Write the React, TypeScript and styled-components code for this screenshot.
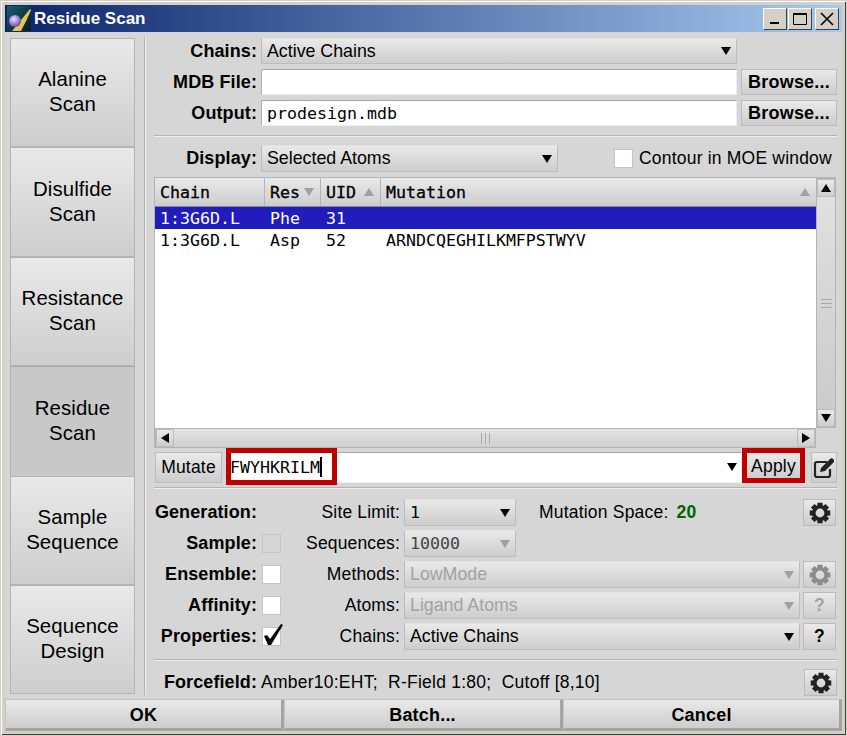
import React from "react";
import styled, { createGlobalStyle } from "styled-components";

const Global = createGlobalStyle`
  html, body { margin: 0; padding: 0; background: #d6d6d6; }
  * { box-sizing: border-box; }
`;

const sans = `"Liberation Sans", Arial, sans-serif`;
const mono = `"DejaVu Sans Mono", monospace`;
const buttonFace = `linear-gradient(#e9e9e9, #cdcdcd)`;

const Window = styled.div`
  width: 847px;
  height: 736px;
  padding: 5px 5px 5px;
  background: #d4d0c8;
  box-shadow: inset 0 0 0 1px #d4d0c8, inset 1px 1px 0 1px #fff, inset -1px -1px 0 1px #404040;
  display: flex;
  flex-direction: column;
  font: 17.8px ${sans};
  color: #000;
  overflow: hidden;
`;
const TitleBar = styled.div`
  height: 27px;
  flex: none;
  display: flex;
  align-items: center;
  padding-left: 2px;
  background: linear-gradient(90deg, #0a246a, #a6caf0);
  color: #fff;
  font-weight: bold;
  font-size: 17px;
  gap: 3px;
`;
const TitleText = styled.span`
  flex: 1;
  padding-top: 1px;
`;
const WinButtons = styled.div`
  display: flex;
  padding-right: 3px;
  gap: 1px;
`;
const WinButton = styled.div<{ $gapAfter?: boolean }>`
  width: 24px;
  height: 22px;
  background: #d4d0c8;
  border: 1px solid;
  border-color: #fff #404040 #404040 #fff;
  margin-right: ${(p) => (p.$gapAfter ? "2px" : "0")};
  display: flex;
  align-items: center;
  justify-content: center;
`;
const Body = styled.div`
  flex: 1;
  display: flex;
  background: #d6d6d6;
  min-height: 0;
  padding: 5px 0 4px 5px;
`;
const Tabs = styled.div`
  width: 125px;
  flex: none;
  display: grid;
  grid-auto-rows: 109.4px;
  padding-top: 1px;
`;
const Tab = styled.div<{ $active?: boolean }>`
  display: flex;
  align-items: center;
  justify-content: center;
  text-align: center;
  font-size: 20.4px;
  letter-spacing: 0.1px;
  line-height: 25px;
  background: ${(p) => (p.$active ? "#c8c8c8" : buttonFace)};
  border: 1px solid #b4b4b4;
  border-width: ${(p) => (p.$active ? "1px 1px 0" : "1px")};
  border-top-color: ${(p) => (p.$active ? "#a8a8a8" : "#b4b4b4")};
  padding-bottom: 1px;
`;
const Main = styled.div`
  margin-left: 9px;
  padding-left: 9px;
  width: 693px;
  border-left: 1px solid #b0b0b0;
  box-shadow: inset 1px 0 0 #eee;
  display: flex;
  flex-direction: column;
`;
const FileForm = styled.div`
  display: grid;
  grid-template-columns: 103px 476px 96px;
  grid-auto-rows: 26px;
  column-gap: 4px;
  row-gap: 5px;
  padding-top: 1px;
`;
const BoldLabel = styled.div`
  font-weight: bold;
  font-size: 18px;
  letter-spacing: 0.1px;
  text-align: right;
  align-self: center;
  white-space: nowrap;
`;
const Label = styled.div`
  font-size: 17.5px;
  letter-spacing: 0.15px;
  text-align: right;
  padding-right: 4px;
  align-self: center;
  white-space: nowrap;
`;
const Select = styled.div<{ $disabled?: boolean }>`
  display: flex;
  align-items: center;
  justify-content: space-between;
  height: 100%;
  padding: 0 5px 0 5px;
  background: ${buttonFace};
  border: 1px solid #bcbcbc;
  border-top-color: #e2e2e2;
  color: ${(p) => (p.$disabled ? "#a3a3a3" : "#000")};
`;
const Arrow = styled.span<{ $dir?: "up" | "down" | "left" | "right"; $muted?: boolean }>`
  display: inline-block;
  flex: none;
  width: 0;
  height: 0;
  border-style: solid;
  border-color: transparent;
  ${(p) => {
    const c = p.$muted ? "#a0a0a0" : "#000";
    switch (p.$dir) {
      case "up":
        return `border-width: 0 5px 8px; border-bottom-color: ${c};`;
      case "left":
        return `border-width: 5px 8px 5px 0; border-right-color: ${c};`;
      case "right":
        return `border-width: 5px 0 5px 8px; border-left-color: ${c};`;
      default:
        return `border-width: 8px 5px 0; border-top-color: ${c};`;
    }
  }}
`;
const TextField = styled.div`
  background: #fff;
  border: 1px solid #c4c4c4;
  border-left-color: #b0b0b0;
  border-top-color: #a8a8a8;
  border-bottom-color: #eee;
  border-right-color: #eee;
  display: flex;
  align-items: center;
  padding-left: 5px;
  font: 16.6px ${mono};
  color: #000;
  white-space: nowrap;
`;
const Button = styled.div<{ $bold?: boolean }>`
  background: ${buttonFace};
  border: 1px solid #bcbcbc;
  display: flex;
  align-items: center;
  justify-content: center;
  font-weight: ${(p) => (p.$bold ? "bold" : "normal")};
  font-size: ${(p) => (p.$bold ? "18px" : "17.5px")};
  letter-spacing: 0.2px;
  white-space: nowrap;
`;
const Separator = styled.div<{ $before: number; $after: number }>`
  flex: none;
  height: 2px;
  width: 683px;
  background: #b4b4b4;
  border-bottom: 1px solid #eee;
  margin: ${(p) => `${p.$before}px 0 ${p.$after}px`};
`;
const DisplayRow = styled.div`
  display: grid;
  grid-template-columns: 103px 301px 56px 19px 1fr;
  height: 27px;
  flex: none;
`;
const DisplaySelect = styled(Select)`
  margin-left: 4px;
`;
const CheckBox = styled.div<{ $disabled?: boolean }>`
  width: 19px;
  height: 19px;
  flex: none;
  position: relative;
  background: ${(p) => (p.$disabled ? "#d6d6d6" : "#fff")};
  border: 1px solid #c4c4c4;
  align-self: center;
`;
const CheckMark = styled.svg`
  position: absolute;
  left: 0;
  top: -5px;
  overflow: visible;
`;
const ContourLabel = styled.div`
  padding-left: 6px;
  align-self: center;
  white-space: nowrap;
  font-size: 17.5px;
  letter-spacing: 0.2px;
`;
const ListPanel = styled.div`
  margin-top: 5px;
  flex: none;
  height: 271px;
  width: 682px;
  display: grid;
  grid-template-columns: 661px 20px;
  grid-template-rows: 1fr 20px;
  border-top: 1px solid #b4b4b4;
  border-left: 1px solid #b4b4b4;
`;
const List = styled.div`
  background: #fff;
  display: flex;
  flex-direction: column;
  min-height: 0;
`;
const COLS = "110px 56px 60px 1fr";
const HeaderRow = styled.div`
  height: 29px;
  flex: none;
  display: grid;
  grid-template-columns: ${COLS};
  background: ${buttonFace};
  border-bottom: 1px solid #888;
`;
const HeaderCell = styled.div`
  display: flex;
  align-items: center;
  justify-content: space-between;
  padding: 0 6px 0 5px;
  border-right: 1px solid #b4b4b4;
  &:last-child {
    border-right: 0;
  }
`;
const HeaderText = styled.span`
  font: 16.6px ${mono};
  -webkit-text-stroke: 0.3px #000;
`;
const DataRow = styled.div<{ $selected?: boolean }>`
  height: 22px;
  display: grid;
  grid-template-columns: ${COLS};
  align-items: center;
  background: ${(p) => (p.$selected ? "#201cbe" : "#fff")};
  color: ${(p) => (p.$selected ? "#fff" : "#000")};
`;
const DataCell = styled.div`
  padding-left: 5px;
  font: 16.6px ${mono};
  white-space: nowrap;
`;
const ScrollV = styled.div`
  grid-row: 1;
  grid-column: 2;
  background: linear-gradient(#e2e2e2, #c9c9c9);
  border: 1px solid #b4b4b4;
  display: flex;
  flex-direction: column;
  justify-content: space-between;
  width: 20px;
`;
const ScrollH = styled.div`
  grid-row: 2;
  grid-column: 1;
  background: linear-gradient(#e4e4e4, #cfcfcf);
  border: 1px solid #b4b4b4;
  display: flex;
  justify-content: space-between;
  align-items: stretch;
`;
const ScrollButton = styled.div`
  width: 18px;
  height: 18px;
  flex: none;
  background: ${buttonFace};
  border: 1px solid #bcbcbc;
  display: flex;
  align-items: center;
  justify-content: center;
`;
const Grip = styled.div<{ $horizontal?: boolean }>`
  align-self: center;
  width: ${(p) => (p.$horizontal ? "9px" : "11px")};
  height: ${(p) => (p.$horizontal ? "11px" : "9px")};
  background: ${(p) =>
    p.$horizontal
      ? "repeating-linear-gradient(90deg, #aaa 0 1px, transparent 1px 4px)"
      : "repeating-linear-gradient(180deg, #aaa 0 1px, transparent 1px 4px)"};
`;
const MutateRow = styled.div`
  margin-top: 4px;
  flex: none;
  height: 28px;
  display: grid;
  grid-template-columns: 67px 520px 63px 32px;
  padding-left: 1px;
  width: 683px;
`;
const MutateField = styled(TextField)`
  position: relative;
  margin-left: 4px;
  justify-content: space-between;
  padding: 0 4px 2px 3px;
`;
const Caret = styled.span`
  display: inline-block;
  width: 2px;
  height: 20px;
  background: #000;
  vertical-align: -4px;
`;
const MutationHighlight = styled.div`
  position: absolute;
  left: -1px;
  top: -5px;
  width: 111px;
  height: 37px;
  border: 5px solid #c00000;
  pointer-events: none;
`;
const ApplyButton = styled(Button)`
  border: 5px solid #c00000;
  margin-top: -4px;
  padding-top: 2px;
  height: 35px;
`;
const EditButton = styled(Button)`
  margin-left: 6px;
  color: #222;
`;
const Settings = styled.div`
  display: grid;
  grid-auto-rows: 27px;
  row-gap: 4px;
  flex: none;
`;
const SettingRow = styled.div`
  display: grid;
  grid-template-columns: 103px 24px 123px 396px 36px;
`;
const CheckCell = styled.div`
  display: flex;
  justify-content: flex-end;
  align-items: center;
`;
const SpaceCell = styled.div`
  display: flex;
  align-items: center;
  justify-content: flex-start;
`;
const SpaceInfo = styled.div`
  display: flex;
  align-items: center;
  gap: 8px;
  margin-left: 23px;
  font-size: 17.5px;
  letter-spacing: 0.2px;
`;
const SpaceValue = styled.span`
  color: #006400;
  font-weight: bold;
`;
const IconButton = styled(Button)<{ $disabled?: boolean }>`
  width: 33px;
  justify-self: end;
  color: ${(p) => (p.$disabled ? "#8c8c8c" : "#222")};
`;
const HelpText = styled.span<{ $disabled?: boolean }>`
  color: ${(p) => (p.$disabled ? "#a3a3a3" : "#000")};
  font-weight: bold;
`;
const MonoValue = styled.span<{ $dim?: boolean }>`
  font: 16.6px ${mono};
  color: ${(p) => (p.$dim ? "#444" : "#000")};
`;
const SmallSelect = styled(Select)`
  width: 112px;
`;
const ForcefieldRow = styled.div`
  display: grid;
  grid-template-columns: 103px 1fr 33px;
  height: 27px;
  width: 683px;
  flex: none;
`;
const ForcefieldText = styled.div`
  padding-left: 4px;
  align-self: center;
  font-size: 17.5px;
  letter-spacing: 0.25px;
  white-space: pre;
`;
const Footer = styled.div`
  height: 32px;
  flex: none;
  display: grid;
  grid-template-columns: 279px 279px 279px;
`;
const FooterButton = styled(Button)`
  border: 1px solid;
  border-color: #c4c4c4 #a4a4a4 #a4a4a4 #c4c4c4;
  border-width: 1px 3px 3px 1px;
  padding-top: 2px;
`;

const Gear = ({ size = 22 }: { size?: number }) => {
  const teeth = [0, 45, 90, 135, 180, 225, 270, 315];
  return (
    <svg width={size} height={size} viewBox="0 0 24 24">
      {teeth.map((a) => (
        <rect key={a} x="9.2" y="0.8" width="5.6" height="5" fill="currentColor" transform={`rotate(${a} 12 12)`} />
      ))}
      <circle cx="12" cy="12" r="6.8" fill="none" stroke="currentColor" strokeWidth="4" />
    </svg>
  );
};

const EditIcon = () => (
  <svg width="22" height="22" viewBox="0 0 22 22">
    <path d="M14 5H4a2 2 0 0 0-2 2v11a2 2 0 0 0 2 2h11a2 2 0 0 0 2-2v-6" fill="none" stroke="currentColor" strokeWidth="2.2" />
    <path d="M7 15 L8 11 L17 2 L19 1 L21 3 L21 5 L12 14 Z" fill="currentColor" />
  </svg>
);

const Logo = () => (
  <svg width="24" height="25" viewBox="0 0 24 25">
    <defs>
      <linearGradient id="logoBg" x1="0" y1="0" x2="1" y2="1">
        <stop offset="0" stopColor="#1a5f70" />
        <stop offset="1" stopColor="#06181f" />
      </linearGradient>
      <radialGradient id="logoBall" cx="0.4" cy="0.35" r="0.7">
        <stop offset="0" stopColor="#efe6fb" />
        <stop offset="0.5" stopColor="#a88ae0" />
        <stop offset="1" stopColor="#5a3f9c" />
      </radialGradient>
    </defs>
    <rect width="24" height="25" fill="url(#logoBg)" />
    <path d="M5 25 Q14 14 23 3 L24 4 Q20 14 14 25 Z" fill="#e4c64a" />
    <circle cx="8" cy="15" r="6" fill="url(#logoBall)" />
  </svg>
);

const tabs = [
  ["Alanine", "Scan"],
  ["Disulfide", "Scan"],
  ["Resistance", "Scan"],
  ["Residue", "Scan"],
  ["Sample", "Sequence"],
  ["Sequence", "Design"],
];

export default function App() {
  return (
    <>
      <Global />
      <Window>
        <TitleBar>
          <Logo />
          <TitleText>Residue Scan</TitleText>
          <WinButtons>
            <WinButton>
              <svg width="12" height="12"><rect x="1" y="9" width="9" height="2" fill="#000" /></svg>
            </WinButton>
            <WinButton $gapAfter>
              <svg width="16" height="14"><path d="M1.5 2.5h13v10h-13z M1 1.5h14" fill="none" stroke="#000" /></svg>
            </WinButton>
            <WinButton>
              <svg width="14" height="14"><path d="M1 1 L13 13 M13 1 L1 13" stroke="#000" strokeWidth="1.6" /></svg>
            </WinButton>
          </WinButtons>
        </TitleBar>
        <Body>
          <Tabs>
            {tabs.map(([a, b]) => (
              <Tab key={a + b} $active={a === "Residue"}>
                {a}
                <br />
                {b}
              </Tab>
            ))}
          </Tabs>
          <Main>
            <FileForm>
              <BoldLabel>Chains:</BoldLabel>
              <Select>
                Active Chains
                <Arrow />
              </Select>
              <span />
              <BoldLabel>MDB File:</BoldLabel>
              <TextField />
              <Button $bold>Browse...</Button>
              <BoldLabel>Output:</BoldLabel>
              <TextField>prodesign.mdb</TextField>
              <Button $bold>Browse...</Button>
            </FileForm>
            <Separator $before={9} $after={8} />
            <DisplayRow>
              <BoldLabel>Display:</BoldLabel>
              <DisplaySelect>
                Selected Atoms
                <Arrow />
              </DisplaySelect>
              <span />
              <CheckBox />
              <ContourLabel>Contour in MOE window</ContourLabel>
            </DisplayRow>
            <ListPanel>
              <List>
                <HeaderRow>
                  <HeaderCell>
                    <HeaderText>Chain</HeaderText>
                  </HeaderCell>
                  <HeaderCell>
                    <HeaderText>Res</HeaderText>
                    <Arrow $muted />
                  </HeaderCell>
                  <HeaderCell>
                    <HeaderText>UID</HeaderText>
                    <Arrow $dir="up" $muted />
                  </HeaderCell>
                  <HeaderCell>
                    <HeaderText>Mutation</HeaderText>
                    <Arrow $dir="up" $muted />
                  </HeaderCell>
                </HeaderRow>
                <DataRow $selected>
                  <DataCell>1:3G6D.L</DataCell>
                  <DataCell>Phe</DataCell>
                  <DataCell>31</DataCell>
                  <DataCell />
                </DataRow>
                <DataRow>
                  <DataCell>1:3G6D.L</DataCell>
                  <DataCell>Asp</DataCell>
                  <DataCell>52</DataCell>
                  <DataCell>ARNDCQEGHILKMFPSTWYV</DataCell>
                </DataRow>
              </List>
              <ScrollV>
                <ScrollButton>
                  <Arrow $dir="up" />
                </ScrollButton>
                <Grip />
                <ScrollButton>
                  <Arrow />
                </ScrollButton>
              </ScrollV>
              <ScrollH>
                <ScrollButton>
                  <Arrow $dir="left" />
                </ScrollButton>
                <Grip $horizontal />
                <ScrollButton>
                  <Arrow $dir="right" />
                </ScrollButton>
              </ScrollH>
            </ListPanel>
            <MutateRow>
              <Button>Mutate</Button>
              <MutateField>
                <span>
                  FWYHKRILM
                  <Caret />
                </span>
                <Arrow />
                <MutationHighlight />
              </MutateField>
              <ApplyButton>Apply</ApplyButton>
              <EditButton>
                <EditIcon />
              </EditButton>
            </MutateRow>
            <Separator $before={7} $after={10} />
            <Settings>
              <SettingRow>
                <BoldLabel>Generation:</BoldLabel>
                <span />
                <Label>Site Limit:</Label>
                <SpaceCell>
                  <SmallSelect>
                    <MonoValue>1</MonoValue>
                    <Arrow />
                  </SmallSelect>
                  <SpaceInfo>
                    Mutation Space: <SpaceValue>20</SpaceValue>
                  </SpaceInfo>
                </SpaceCell>
                <IconButton>
                  <Gear />
                </IconButton>
              </SettingRow>
              <SettingRow>
                <BoldLabel>Sample:</BoldLabel>
                <CheckCell>
                  <CheckBox $disabled />
                </CheckCell>
                <Label>Sequences:</Label>
                <SmallSelect $disabled>
                  <MonoValue $dim>10000</MonoValue>
                  <Arrow $muted />
                </SmallSelect>
              </SettingRow>
              <SettingRow>
                <BoldLabel>Ensemble:</BoldLabel>
                <CheckCell>
                  <CheckBox />
                </CheckCell>
                <Label>Methods:</Label>
                <Select $disabled>
                  LowMode
                  <Arrow $muted />
                </Select>
                <IconButton $disabled>
                  <Gear />
                </IconButton>
              </SettingRow>
              <SettingRow>
                <BoldLabel>Affinity:</BoldLabel>
                <CheckCell>
                  <CheckBox />
                </CheckCell>
                <Label>Atoms:</Label>
                <Select $disabled>
                  Ligand Atoms
                  <Arrow $muted />
                </Select>
                <IconButton>
                  <HelpText $disabled>?</HelpText>
                </IconButton>
              </SettingRow>
              <SettingRow>
                <BoldLabel>Properties:</BoldLabel>
                <CheckCell>
                  <CheckBox>
                    <CheckMark width="20" height="24" viewBox="0 0 20 24">
                      <path d="M1 13 L4 12 L7 16 L18 1 L20 2 L8 22 L5 22 Z" fill="#000" />
                    </CheckMark>
                  </CheckBox>
                </CheckCell>
                <Label>Chains:</Label>
                <Select>
                  Active Chains
                  <Arrow />
                </Select>
                <IconButton>
                  <HelpText>?</HelpText>
                </IconButton>
              </SettingRow>
            </Settings>
            <Separator $before={9} $after={8} />
            <ForcefieldRow>
              <BoldLabel>Forcefield:</BoldLabel>
              <ForcefieldText>Amber10:EHT;  R-Field 1:80;  Cutoff [8,10]</ForcefieldText>
              <IconButton>
                <Gear />
              </IconButton>
            </ForcefieldRow>
          </Main>
        </Body>
        <Footer>
          <FooterButton $bold>OK</FooterButton>
          <FooterButton $bold>Batch...</FooterButton>
          <FooterButton $bold>Cancel</FooterButton>
        </Footer>
      </Window>
    </>
  );
}
